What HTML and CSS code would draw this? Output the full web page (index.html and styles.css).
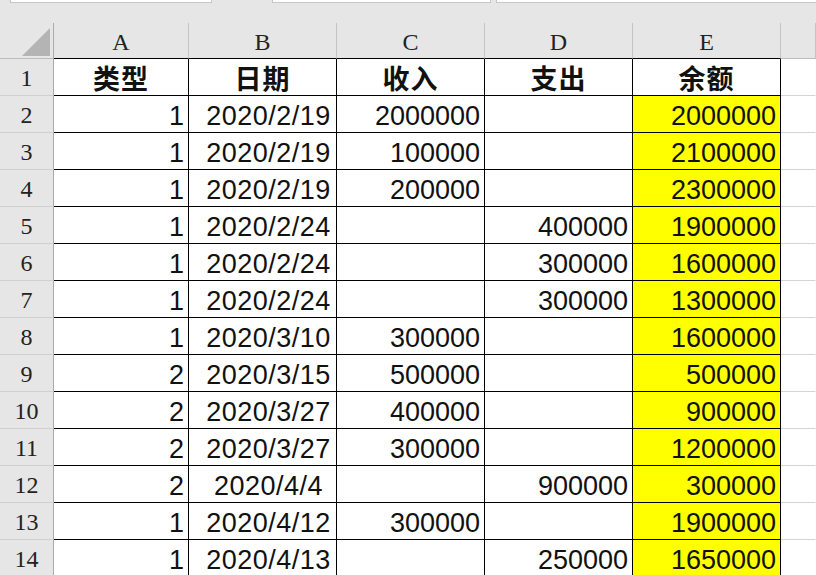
FILE: index.html
```html
<!DOCTYPE html>
<html lang="zh">
<head>
<meta charset="utf-8">
<title>Sheet</title>
<link rel="stylesheet" href="styles.css">
</head>
<body>
<div class="topbar">
  <div class="box box1"></div>
  <div class="box box2"></div>
  <div class="box box3"></div>
</div>
<div class="sheet">
  <div class="corner"><svg width="28" height="28" viewBox="0 0 28 28"><polygon points="0,28 28,0 28,28" fill="#b4b4b4"/></svg></div>
  <div class="colhead">A</div>
  <div class="colhead">B</div>
  <div class="colhead">C</div>
  <div class="colhead">D</div>
  <div class="colhead">E</div>
  <div class="colhead colf"></div>

  <div class="rowhead">1</div>
  <div class="cell title">类型</div>
  <div class="cell title">日期</div>
  <div class="cell title">收入</div>
  <div class="cell title">支出</div>
  <div class="cell title">余额</div>
  <div class="blank"></div>

  <div class="rowhead">2</div>
  <div class="cell num">1</div><div class="cell date">2020/2/19</div><div class="cell num">2000000</div><div class="cell num"></div><div class="cell num hl">2000000</div><div class="blank"></div>
  <div class="rowhead">3</div>
  <div class="cell num">1</div><div class="cell date">2020/2/19</div><div class="cell num">100000</div><div class="cell num"></div><div class="cell num hl">2100000</div><div class="blank"></div>
  <div class="rowhead">4</div>
  <div class="cell num">1</div><div class="cell date">2020/2/19</div><div class="cell num">200000</div><div class="cell num"></div><div class="cell num hl">2300000</div><div class="blank"></div>
  <div class="rowhead">5</div>
  <div class="cell num">1</div><div class="cell date">2020/2/24</div><div class="cell num"></div><div class="cell num">400000</div><div class="cell num hl">1900000</div><div class="blank"></div>
  <div class="rowhead">6</div>
  <div class="cell num">1</div><div class="cell date">2020/2/24</div><div class="cell num"></div><div class="cell num">300000</div><div class="cell num hl">1600000</div><div class="blank"></div>
  <div class="rowhead">7</div>
  <div class="cell num">1</div><div class="cell date">2020/2/24</div><div class="cell num"></div><div class="cell num">300000</div><div class="cell num hl">1300000</div><div class="blank"></div>
  <div class="rowhead">8</div>
  <div class="cell num">1</div><div class="cell date">2020/3/10</div><div class="cell num">300000</div><div class="cell num"></div><div class="cell num hl">1600000</div><div class="blank"></div>
  <div class="rowhead">9</div>
  <div class="cell num">2</div><div class="cell date">2020/3/15</div><div class="cell num">500000</div><div class="cell num"></div><div class="cell num hl">500000</div><div class="blank"></div>
  <div class="rowhead">10</div>
  <div class="cell num">2</div><div class="cell date">2020/3/27</div><div class="cell num">400000</div><div class="cell num"></div><div class="cell num hl">900000</div><div class="blank"></div>
  <div class="rowhead">11</div>
  <div class="cell num">2</div><div class="cell date">2020/3/27</div><div class="cell num">300000</div><div class="cell num"></div><div class="cell num hl">1200000</div><div class="blank"></div>
  <div class="rowhead">12</div>
  <div class="cell num">2</div><div class="cell date">2020/4/4</div><div class="cell num"></div><div class="cell num">900000</div><div class="cell num hl">300000</div><div class="blank"></div>
  <div class="rowhead">13</div>
  <div class="cell num">1</div><div class="cell date">2020/4/12</div><div class="cell num">300000</div><div class="cell num"></div><div class="cell num hl">1900000</div><div class="blank"></div>
  <div class="rowhead">14</div>
  <div class="cell num">1</div><div class="cell date">2020/4/13</div><div class="cell num"></div><div class="cell num">250000</div><div class="cell num hl">1650000</div><div class="blank"></div>
</div>
</body>
</html>
```
FILE: styles.css
```css
html, body {
  margin: 0;
  padding: 0;
  width: 816px;
  height: 575px;
  overflow: hidden;
  background: #e6e6e6;
}
.topbar {
  height: 23px;
  display: flex;
  align-items: flex-start;
}
.box {
  height: 3px;
  box-sizing: border-box;
  background: #fff;
  border: 1px solid #c6c6c6;
  border-top: none;
}
.box1 { margin-left: 10px; width: 202px; }
.box2 { margin-left: 60px; width: 219px; }
.box3 { margin-left: 5px; flex: 1; border-right: none; }

.sheet {
  display: grid;
  grid-template-columns: 54px 135px 148px 148px 148px 148px 1fr;
  grid-template-rows: 36px repeat(14, 37px);
}
.sheet > div {
  box-sizing: border-box;
  border-right: 1px solid transparent;
  border-bottom: 1px solid transparent;
}
.corner {
  background: #e6e6e6;
  border-right-color: #ababab !important;
  border-bottom-color: #bcbcbc !important;
  display: flex;
  align-items: flex-end;
  justify-content: flex-end;
  padding: 0 3px 2px 0;
}
.corner svg { display: block; }
.colhead {
  background: #e6e6e6;
  border-right-color: #c4c4c4 !important;
  border-bottom-color: #000 !important;
  font-family: "Liberation Serif", "Times New Roman", serif;
  font-size: 24px;
  color: #222;
  display: flex;
  align-items: flex-end;
  justify-content: center;
  line-height: 24px;
  padding-bottom: 4px;
}
.colhead.colf {
  border-bottom-color: #bcbcbc !important;
}
.rowhead {
  background: #e6e6e6;
  border-right-color: #ababab !important;
  border-bottom-color: #cfcfcf !important;
  font-family: "Liberation Serif", "Times New Roman", serif;
  font-size: 24px;
  color: #222;
  display: flex;
  align-items: flex-end;
  justify-content: center;
  line-height: 24px;
  padding-bottom: 5px;
}
.cell {
  background: #fff;
  border-right-color: #000 !important;
  border-bottom-color: #000 !important;
  display: flex;
  align-items: flex-end;
  font-family: "Liberation Sans", Arial, sans-serif;
  font-size: 27px;
  line-height: 27px;
  color: #111;
  padding-bottom: 2px;
  white-space: nowrap;
}
.title {
  justify-content: center;
  font-family: "Noto Sans CJK SC", sans-serif;
  font-weight: bold;
  font-size: 27px;
  line-height: 30px;
  padding-bottom: 2px;
  letter-spacing: 1px;
}
.num {
  justify-content: flex-end;
  padding-right: 4px;
}
.date {
  justify-content: center;
  padding-left: 12px;
  letter-spacing: 0.5px;
}
.hl {
  background: #ffff00;
}
.blank {
  background: #fff;
  border-bottom-color: #d4d4d4 !important;
}
```
